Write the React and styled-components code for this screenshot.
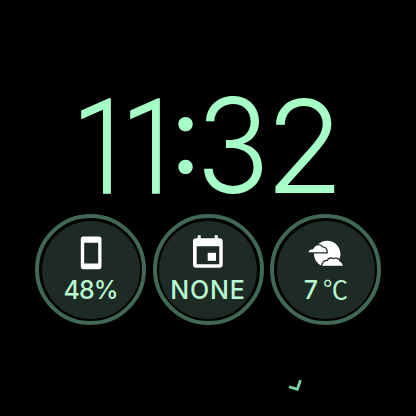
import React from "react";
import styled, { createGlobalStyle } from "styled-components";

const time = [
    { char: "1", width: 49, font: "Roboto", size: 131, stroke: 1.4, drop: 2, stretch: 0.86 },
    { char: "1", width: 49, font: "Roboto", size: 131, stroke: 1.4, drop: 2, stretch: 0.86 },
    { char: ":", width: 26, size: 108, weight: 400, drop: -12 },
    { char: "3", width: 69, size: 131, weight: 320, stretch: 0.93 },
    { char: "2", width: 62, weight: 320 },
];

const PhoneIcon = () => (
    <Icon viewBox="0 0 40 36">
        <path fillRule="evenodd" d="M12.400 2.500h15.500a2.600 2.600 0 0 1 2.600 2.600v27.500a2.600 2.600 0 0 1-2.600 2.600H12.400a2.600 2.600 0 0 1-2.600-2.600V5.100a2.600 2.600 0 0 1 2.600-2.600zM13.200 8.800v20.700h14V8.800z" />
    </Icon>
);

const CalendarIcon = () => (
    <Icon viewBox="0 0 40 36">
        <path fillRule="evenodd" d="M9.700 1.200h3v3h14v-3h3v3h1.800a3.200 3.200 0 0 1 3.200 3.200v23.200a3.200 3.200 0 0 1-3.200 3.200H8.200A3.200 3.200 0 0 1 5 30.600V7.400a3.200 3.200 0 0 1 3.200-3.200h1.500zM8.700 12.200v18h22.600v-18z" />
        <rect x="19.700" y="18.800" width="8.300" height="8" />
    </Icon>
);

const WeatherIcon = () => (
    <Icon viewBox="0 0 40 36">
        <path d="M15.300 31.800A13.200 13.200 0 1 1 27.100 31.800z" />
        <Outline d="M2.500 18.200c.5-2.400 2.500-3 4.700-3 1.200-2.700 3.200-4 5.400-3.900 2 .1 3 1.100 3.700 2.300 2.900 0 4.400 2 4.200 4.600z" />
        <Outline d="M16.200 31.800c.6-3.200 2.400-4.900 5.200-4.700 1.600-2.700 4-3.300 6-1.900 3.200-1.200 5.600-.2 6.200 2.400 1.600.7 2.800 2.200 3.200 4.200z" />
    </Icon>
);

const widgets = [
    { label: "48%", icon: PhoneIcon, tracking: -1 },
    { label: "NONE", icon: CalendarIcon, tracking: 0.8 },
    { label: "7 ", unit: "℃", icon: WeatherIcon, tracking: -0.9 },
];

const App = () => {
    return (
        <Screen>
            <GlobalStyle />
            <Clock>
                {time.map(({ char, ...glyph }, i) => (
                    <Digit key={i} $glyph={glyph}>{char}</Digit>
                ))}
            </Clock>
            <Widgets>
                {widgets.map(({ label, unit, tracking, icon: WidgetIcon }) => (
                    <Ring key={label}>
                        <Disc>
                            <WidgetIcon />
                            <Label $tracking={tracking}>{label}{unit && <Unit>{unit}</Unit>}</Label>
                        </Disc>
                    </Ring>
                ))}
            </Widgets>
            <Hand viewBox="0 0 16 14">
                <path d="M1 7.800L9.300 10.300L12.500 1.200" />
            </Hand>
        </Screen>
    );
};

export default App;

const GlobalStyle = createGlobalStyle`
    body {
        margin: 0;
        background: #000;
    }
`;

const Screen = styled.main`
    display: flex;
    flex-direction: column;
    box-sizing: border-box;
    width: 416px;
    height: 416px;
    padding-top: 82px;
    overflow: hidden;
    background: #000;
    font-family: Inter, sans-serif;
`;

const Clock = styled.div`
    display: flex;
    height: 132px;
    padding-left: 72px;
    color: #a5ffc6;
`;

const Digit = styled.span`
    flex: none;
    width: ${({ $glyph }) => $glyph.width}px;
    margin-top: ${({ $glyph }) => $glyph.drop || 0}px;
    font-family: ${({ $glyph }) => $glyph.font || "Inter"}, sans-serif;
    font-size: ${({ $glyph }) => $glyph.size || 129}px;
    font-weight: ${({ $glyph }) => $glyph.weight || 300};
    line-height: 128px;
    transform: scaleX(${({ $glyph }) => $glyph.stretch || 1});
    transform-origin: left;
    -webkit-text-stroke: ${({ $glyph }) => $glyph.stroke || 0}px currentColor;
`;

const Widgets = styled.div`
    display: flex;
    gap: 6.5px;
    padding-left: 35px;
`;

const Ring = styled.div`
    box-sizing: border-box;
    width: 111px;
    height: 111px;
    padding: 2.5px;
    border: 4px solid #406854;
    border-radius: 50%;
`;

const Disc = styled.div`
    display: flex;
    flex-direction: column;
    align-items: center;
    box-sizing: border-box;
    height: 98px;
    padding-top: 13px;
    border-radius: 50%;
    background: #1e2b24;
`;

const Icon = styled.svg`
    width: 40px;
    height: 36px;
    fill: #fff;
`;

const Outline = styled.path`
    stroke: #1e2b24;
    stroke-width: 2.6px;
    paint-order: stroke;
`;

const Label = styled.span`
    color: #b8f7d0;
    font-size: 25px;
    font-weight: 500;
    letter-spacing: ${({ $tracking }) => $tracking}px;
    line-height: 40px;
    white-space: pre;
`;

const Unit = styled.span`
    font-family: "Noto Sans CJK SC", sans-serif;
    font-weight: 400;
    line-height: 1;
`;

const Hand = styled.svg`
    width: 16px;
    height: 14px;
    margin: 54px 0 0 288px;
    fill: none;
    stroke: #7fd6a5;
    stroke-width: 2.7;
`;
